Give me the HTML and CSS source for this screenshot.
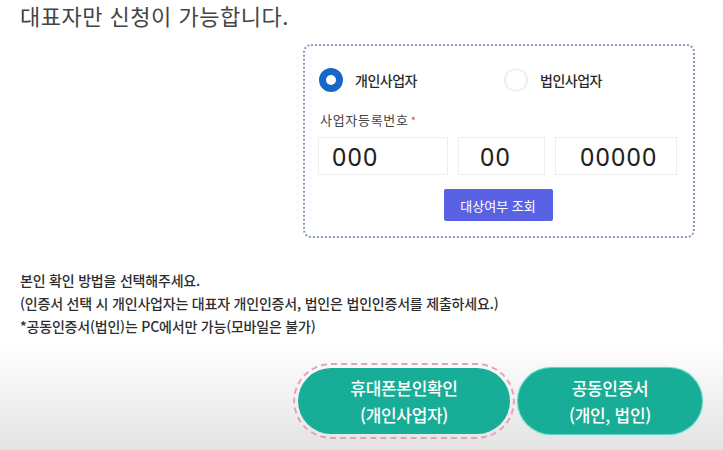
FILE: index.html
```html
<!DOCTYPE html>
<html lang="ko">
<head>
<meta charset="utf-8">
<title>대표자 신청</title>
<link rel="stylesheet" href="styles.css">
</head>
<body>
<main class="page">
  <h1 class="title">대표자만 신청이 가능합니다.</h1>

  <section class="card">
    <div class="radios">
      <label class="radio radio--on"><span class="dot"></span><span class="radio-text">개인사업자</span></label>
      <label class="radio"><span class="dot"></span><span class="radio-text">법인사업자</span></label>
    </div>
    <div class="field-label">사업자등록번호<span class="req">*</span></div>
    <div class="inputs">
      <div class="box box--a">000</div>
      <div class="box box--b">00</div>
      <div class="box box--c">00000</div>
    </div>
    <div class="btn-wrap"><button class="check-btn">대상여부 조회</button></div>
  </section>

  <div class="notes">
    <p>본인 확인 방법을 선택해주세요.</p>
    <p>(인증서 선택 시 개인사업자는 대표자 개인인증서, 법인은 법인인증서를 제출하세요.)</p>
    <p>*공동인증서(법인)는 PC에서만 가능(모바일은 불가)</p>
  </div>

  <div class="actions">
    <button class="pill pill--focus">휴대폰본인확인<br>(개인사업자)</button>
    <button class="pill pill--second">공동인증서<br>(개인, 법인)</button>
  </div>
</main>
</body>
</html>
```

FILE: styles.css
```css
html, body {
  margin: 0;
  padding: 0;
}
body {
  width: 723px;
  height: 450px;
  overflow: hidden;
  font-family: "Noto Sans CJK KR", "Noto Sans", sans-serif;
  color: #333;
  background: linear-gradient(to bottom, #ffffff 0, #ffffff 340px, #f2f2f2 395px, #e3e3e3 450px);
}
.page {
  display: flex;
  flex-direction: column;
}
.title {
  margin: 0;
  padding-left: 20px;
  font-size: 22px;
  line-height: 30px;
  font-weight: 400;
  color: #444;
  letter-spacing: 0.5px;
}
.card {
  box-sizing: border-box;
  margin: 14px 0 0 303px;
  width: 392px;
  height: 194px;
  border: 2px dotted #8b9ab6;
  border-radius: 8px;
  padding: 22px 0 0 14px;
  background: #fff;
}
.radios {
  display: flex;
  height: 24px;
  align-items: center;
}
.radio {
  display: flex;
  align-items: center;
  gap: 12px;
  width: 185px;
  font-size: 14px;
  color: #2b2b2b;
  letter-spacing: -0.5px;
  font-weight: 500;
}
.dot {
  box-sizing: border-box;
  width: 24px;
  height: 24px;
  border-radius: 50%;
  border: 2px solid #f0f0f0;
  background: #fff;
}
.radio--on .dot {
  border: 7px solid #1767c9;
}
.field-label {
  margin: 19px 0 0 1px;
  font-size: 13px;
  line-height: 18px;
  color: #444;
  letter-spacing: 0.7px;
}
.req {
  color: #e04a5a;
  font-size: 11px;
  margin-left: 2px;
  vertical-align: top;
}
.inputs {
  display: flex;
  gap: 10px;
  margin: 8px 0 0 -1px;
}
.box {
  box-sizing: border-box;
  height: 38px;
  border: 1px solid #eeeeee;
  font-family: "Noto Sans", sans-serif;
  font-size: 25px;
  line-height: 36px;
  color: #222;
  letter-spacing: 1.2px;
}
.box--a { width: 130px; padding-left: 13px; }
.box--b { width: 87px; padding-left: 21px; }
.box--c { width: 122px; padding-left: 24px; }
.btn-wrap {
  display: flex;
  justify-content: center;
  margin: 14px 0 0 -16px;
}
.check-btn {
  width: 109px;
  height: 32px;
  border: 0;
  border-radius: 2px;
  background: #5a62e4;
  color: #fff;
  font-family: "Noto Sans CJK KR", sans-serif;
  font-size: 13px;
  letter-spacing: 0;
}
.notes {
  margin-top: 31px;
  padding-left: 20px;
  font-size: 14px;
  line-height: 23px;
  font-weight: 500;
  color: #2e2e2e;
  letter-spacing: -0.2px;
}
.notes p {
  margin: 0;
}
.actions {
  display: flex;
  gap: 8px;
  margin: 30px 0 0 298px;
}
.pill {
  height: 66px;
  border: 0;
  border-radius: 33px;
  background: #18ad96;
  color: #fff;
  font-family: "Noto Sans CJK KR", sans-serif;
  font-size: 17px;
  line-height: 27px;
  font-weight: 500;
  letter-spacing: -0.3px;
  padding: 0;
}
.pill--focus {
  width: 212px;
  outline: 2px dashed #e4a2ba;
  outline-offset: 3px;
}
.pill--second {
  width: 184px;
  box-shadow: 0 0 0 1px #5fd8c6, 0 0 3px #7fe6d6;
}
```
